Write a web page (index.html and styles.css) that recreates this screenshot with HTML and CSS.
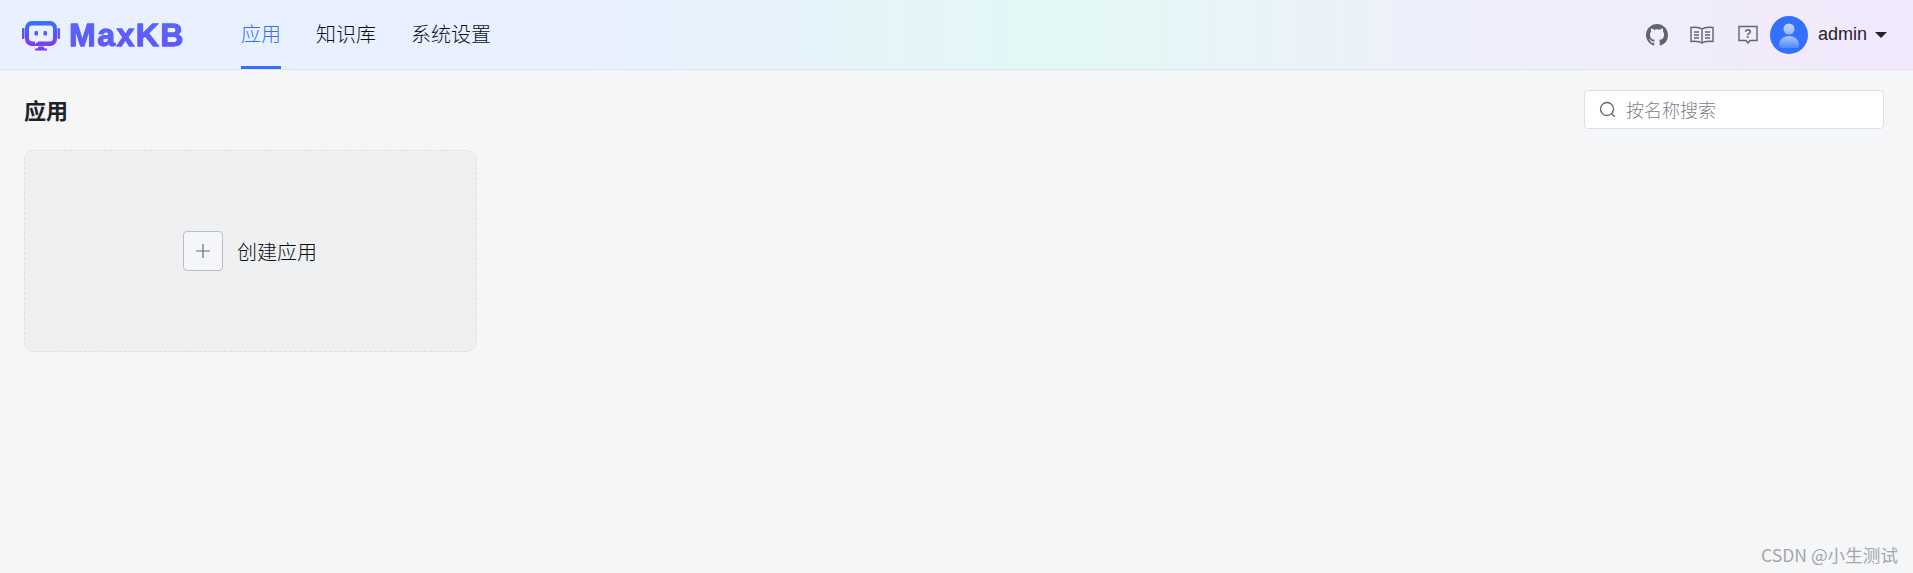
FILE: index.html
```html
<!DOCTYPE html>
<html lang="zh-CN">
<head>
  <meta charset="UTF-8">
  <meta name="viewport" content="width=device-width, initial-scale=1.0">
  <title>MaxKB</title>
  <link rel="stylesheet" href="styles.css">
</head>
<body>
  <header class="app-header">
    <div class="logo">
      <svg class="logo-icon" width="38" height="32" viewBox="0 0 38 32">
        <defs>
          <linearGradient id="logoFill" x1="0" y1="0" x2="0" y2="1">
            <stop offset="0" stop-color="#3370ff"/>
            <stop offset="1" stop-color="#7f3bf5"/>
          </linearGradient>
        </defs>
        <rect x="0" y="8" width="2.500" height="11" rx="1.250" fill="url(#logoFill)"/>
        <rect x="35.500" y="8" width="2.500" height="11" rx="1.250" fill="url(#logoFill)"/>
        <path fill="url(#logoFill)" fill-rule="evenodd" d="M10 1h18a7 7 0 0 1 7 7v11a7 7 0 0 1-7 7H10a7 7 0 0 1-7-7V8a7 7 0 0 1 7-7zM10 5.500a3 3 0 0 0-3 3V18a3.500 3.500 0 0 0 3.500 3.500H13v2.500l3.500-2.500H27.500a3.500 3.500 0 0 0 3.500-3.500V8.500a3 3 0 0 0-3-3z"/>
        <rect x="12.500" y="11" width="3.500" height="4.500" rx="1" fill="url(#logoFill)"/>
        <rect x="21.500" y="11" width="3.500" height="4.500" rx="1" fill="url(#logoFill)"/>
        <path d="M16.500 26.500h5l1 2h2.500v2H13v-2h2.500z" fill="#7f3bf5"/>
      </svg>
      <span class="logo-text">MaxKB</span>
    </div>
    <nav class="main-nav">
      <a class="nav-item active">应用</a>
      <a class="nav-item">知识库</a>
      <a class="nav-item">系统设置</a>
    </nav>
    <div class="header-right">
      <svg class="top-icon github" width="22" height="22" viewBox="0 0 16 16">
        <path fill="#5f666e" d="M8 0C3.580 0 0 3.580 0 8c0 3.540 2.290 6.530 5.470 7.590.4.070.55-.17.55-.38 0-.19-.01-.82-.01-1.490-2.010.37-2.530-.49-2.690-.94-.09-.23-.48-.94-.82-1.130-.28-.15-.68-.52-.01-.53.63-.01 1.080.58 1.230.82.720 1.210 1.870.870 2.330.660.070-.520.280-.870.510-1.070-1.780-.2-3.640-.89-3.640-3.950 0-.870.310-1.590.820-2.150-.080-.2-.360-1.020.080-2.120 0 0 .670-.210 2.200.820a7.420 7.420 0 0 1 4 0c1.530-1.040 2.200-.820 2.200-.820.440 1.100.160 1.920.080 2.120.510.560.820 1.270.820 2.150 0 3.070-1.870 3.750-3.650 3.950.290.250.540.730.540 1.480 0 1.070-.010 1.930-.010 2.200 0 .210.150.460.550.380A8.010 8.010 0 0 0 16 8c0-4.420-3.580-8-8-8z"/>
      </svg>
      <svg class="top-icon book" width="24" height="20" viewBox="0 0 24 20" fill="none" stroke="#5f666e" stroke-width="1.400">
        <path d="M12 4C10 2.500 6 2 1 2.500v14c5-.5 9 0 11 1.500 2-1.500 6-2 11-1.500v-14C18 2 14 2.500 12 4zM12 4v14"/>
        <path d="M4 7h5M4 10h5M4 13h5M15 7h5M15 10h5M15 13h5"/>
      </svg>
      <svg class="top-icon help" width="20" height="20" viewBox="0 0 20 20" fill="none" stroke="#5f666e" stroke-width="1.400">
        <path d="M1 1.500h18v14h-7l-2 2.500-2-2.500H1z"/>
        <text x="10" y="12.500" text-anchor="middle" class="help-mark">?</text>
      </svg>
      <div class="user-menu">
        <svg class="avatar" width="38" height="38" viewBox="0 0 38 38">
          <defs>
            <linearGradient id="headFill" x1="0" y1="0" x2="0" y2="1">
              <stop offset="0" stop-color="#c9dcff"/>
              <stop offset="1" stop-color="#8fb4ff"/>
            </linearGradient>
            <linearGradient id="bodyFill" x1="0" y1="0" x2="0" y2="1">
              <stop offset="0" stop-color="#a9c6ff"/>
              <stop offset="1" stop-color="#5288ff"/>
            </linearGradient>
          </defs>
          <circle cx="19" cy="19" r="19" fill="#3370ff"/>
          <circle cx="19" cy="13" r="5.500" fill="url(#headFill)"/>
          <path d="M9 29c0-5 4-9 10-9s10 4 10 9c0 2-1 3-3 3H12c-2 0-3-1-3-3z" fill="url(#bodyFill)"/>
        </svg>
        <span class="user-name">admin</span>
        <span class="caret"></span>
      </div>
    </div>
  </header>

  <main class="page">
    <div class="page-head">
      <h2 class="page-title">应用</h2>
      <label class="search-box">
        <svg width="17" height="17" viewBox="0 0 17 17" fill="none" stroke="#5f666e" stroke-width="1.300">
          <circle cx="8" cy="8" r="6.500"/>
          <path d="M12.800 12.800l3 3"/>
        </svg>
        <span class="search-placeholder">按名称搜索</span>
      </label>
    </div>
    <div class="app-list">
      <div class="create-card">
        <span class="plus-box">
          <svg width="16" height="16" viewBox="0 0 16 16" stroke="#6b6f75" stroke-width="1.200">
            <path d="M8 1v14M1 8h14"/>
          </svg>
        </span>
        <span class="create-text">创建应用</span>
      </div>
    </div>
  </main>

  <div class="watermark">CSDN @小生测试</div>
</body>
</html>
```

FILE: styles.css
```css
* {
  box-sizing: border-box;
}
html, body {
  height: 100%;
}
body {
  margin: 0;
  background: #f5f6f7;
  color: #1f2329;
  font-family: "Noto Sans CJK SC", "Liberation Sans", sans-serif;
  overflow: hidden;
}
.app-header {
  display: flex;
  align-items: center;
  height: 70px;
  padding: 0 26px 0 22px;
  border-bottom: 1px solid #dfe3ec;
  background: linear-gradient(90deg, #e9f0ff 0%, #e9f0ff 30%, #e3f8f6 56%, #eef0fb 75%, #f2e9fc 100%);
}
.logo {
  display: flex;
  align-items: center;
  width: 219px;
}
.logo-icon {
  margin-top: 2px;
}
.logo-text {
  margin-left: 9px;
  font-family: "Liberation Sans", sans-serif;
  font-size: 32px;
  font-weight: bold;
  letter-spacing: 1.500px;
  line-height: 40px;
  background: linear-gradient(180deg, #4d70ff, #6b4cf6);
  -webkit-background-clip: text;
  background-clip: text;
  color: transparent;
  -webkit-text-stroke: 0.8px #5a5ffa;
}
.main-nav {
  display: flex;
  height: 69px;
  gap: 35px;
}
.nav-item {
  display: flex;
  align-items: center;
  font-size: 20px;
  font-weight: 300;
  color: #0c0f14;
  border-bottom: 3px solid transparent;
}
.nav-item.active {
  color: #3370ff;
  border-bottom-color: #3370ff;
}
.header-right {
  display: flex;
  align-items: center;
  margin-left: auto;
}
.github {
  margin-right: 22px;
}
.book {
  margin-right: 24px;
}
.help {
  margin-right: 12px;
}
.help-mark {
  font-family: "Liberation Sans", sans-serif;
  font-size: 12px;
  font-weight: bold;
  fill: #5f666e;
  stroke: none;
}
.user-menu {
  display: flex;
  align-items: center;
}
.user-name {
  margin-left: 10px;
  font-family: "Liberation Sans", sans-serif;
  font-size: 18px;
}
.caret {
  width: 0;
  height: 0;
  margin-left: 8px;
  border-left: 6px solid transparent;
  border-right: 6px solid transparent;
  border-top: 6px solid #1f2329;
}
.page {
  padding: 20px 29px 0 24px;
}
.page-head {
  display: flex;
  align-items: center;
  justify-content: space-between;
  height: 39px;
}
.page-title {
  margin: -2px 0 0;
  font-size: 22px;
  font-weight: bold;
  line-height: 30px;
}
.search-box {
  display: flex;
  align-items: center;
  width: 300px;
  height: 39px;
  padding-left: 14px;
  background: #fff;
  border: 1px solid #dcdfe6;
  border-radius: 4px;
}
.search-placeholder {
  margin: -2px 0 0 10px;
  font-size: 18px;
  font-weight: 300;
  color: #7d838c;
}
.app-list {
  display: grid;
  grid-template-columns: repeat(4, 453px);
  margin-top: 21px;
}
.create-card {
  display: flex;
  align-items: center;
  justify-content: center;
  height: 202px;
  padding-right: 1px;
  gap: 14px;
  background: #eff0f2;
  border: 1px dashed #dcdee2;
  border-radius: 10px;
}
.plus-box {
  display: flex;
  align-items: center;
  justify-content: center;
  width: 40px;
  height: 40px;
  background: #f5f6f7;
  border: 1px solid #bbbfc4;
  border-radius: 4px;
}
.create-text {
  font-size: 20px;
  font-weight: 300;
  color: #0c0f14;
}
/* site stamp that sits over the page corner */
.watermark {
  position: absolute;
  right: 15px;
  bottom: 6px;
  font-size: 17.600px;
  line-height: 24px;
  color: #a3a7ac;
}
```
